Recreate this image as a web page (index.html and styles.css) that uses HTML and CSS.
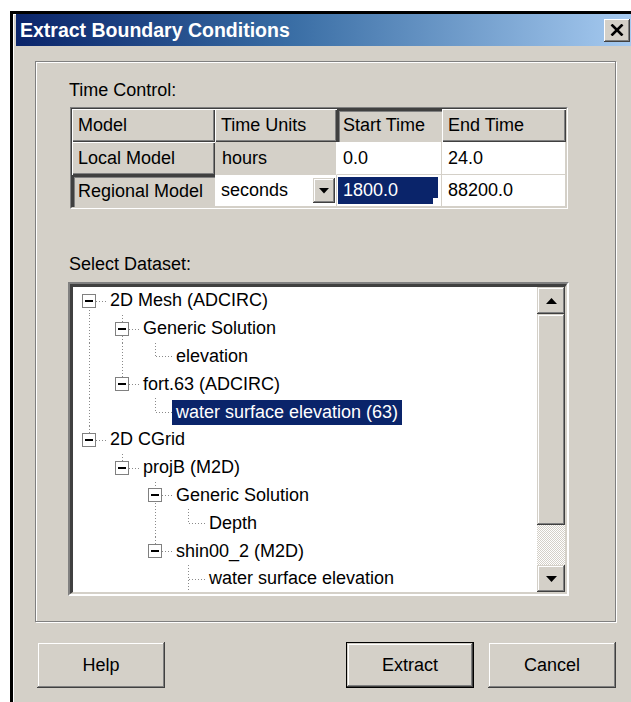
FILE: index.html
```html
<!DOCTYPE html>
<html lang="en">
<head>
<meta charset="utf-8">
<title>Extract Boundary Conditions</title>
<link rel="stylesheet" href="styles.css">
</head>
<body>
<div class="window">
  <div class="titlebar">
    <span class="title">Extract Boundary Conditions</span>
    <span class="close" title="Close">
      <svg width="14" height="12" viewBox="0 0 14 12"><path d="M1.5 0.5 L12.5 11.5 M12.5 0.5 L1.5 11.5" stroke="#000" stroke-width="2.6" fill="none"/></svg>
    </span>
  </div>

  <div class="groupbox">
    <div class="label">Time Control:</div>
    <div class="grid-outer">
      <div class="grid">
        <div class="cell hdr">Model</div>
        <div class="cell hdr">Time Units</div>
        <div class="cell hdr pressed">Start Time</div>
        <div class="cell hdr">End Time</div>

        <div class="cell hdr">Local Model</div>
        <div class="cell data grey">hours</div>
        <div class="cell data">0.0</div>
        <div class="cell data">24.0</div>

        <div class="cell hdr pressed">Regional Model</div>
        <div class="cell data combo">
          <span>seconds</span>
          <span class="dropbtn"><svg width="10" height="6" viewBox="0 0 10 6"><polygon points="0,0 10,0 5,5.5" fill="#000"/></svg></span>
        </div>
        <div class="cell data selcell"><span class="selfill">1800.0</span></div>
        <div class="cell data">88200.0</div>
      </div>
    </div>

    <div class="label dataset">Select Dataset:</div>
    <div class="treebox">
      <div class="treeinner">
        <div class="tree">
          <div class="row">
            <span class="g vb h"><i class="bx"></i></span>
            <span class="lbl">2D Mesh (ADCIRC)</span>
          </div>
          <div class="row">
            <span class="g vf"></span>
            <span class="g vf h"><i class="bx"></i></span>
            <span class="lbl">Generic Solution</span>
          </div>
          <div class="row">
            <span class="g vf"></span>
            <span class="g vf"></span>
            <span class="g vt h"></span>
            <span class="lbl">elevation</span>
          </div>
          <div class="row">
            <span class="g vf"></span>
            <span class="g vt h"><i class="bx"></i></span>
            <span class="lbl">fort.63 (ADCIRC)</span>
          </div>
          <div class="row">
            <span class="g vf"></span>
            <span class="g"></span>
            <span class="g vt h"></span>
            <span class="lbl sel">water surface elevation (63)</span>
          </div>
          <div class="row">
            <span class="g vt h"><i class="bx"></i></span>
            <span class="lbl">2D CGrid</span>
          </div>
          <div class="row">
            <span class="g"></span>
            <span class="g vt h"><i class="bx"></i></span>
            <span class="lbl">projB (M2D)</span>
          </div>
          <div class="row">
            <span class="g"></span>
            <span class="g"></span>
            <span class="g vf h"><i class="bx"></i></span>
            <span class="lbl">Generic Solution</span>
          </div>
          <div class="row">
            <span class="g"></span>
            <span class="g"></span>
            <span class="g vf"></span>
            <span class="g vt h"></span>
            <span class="lbl">Depth</span>
          </div>
          <div class="row">
            <span class="g"></span>
            <span class="g"></span>
            <span class="g vt h"><i class="bx"></i></span>
            <span class="lbl">shin00_2 (M2D)</span>
          </div>
          <div class="row">
            <span class="g"></span>
            <span class="g"></span>
            <span class="g"></span>
            <span class="g vf h"></span>
            <span class="lbl">water surface elevation</span>
          </div>
        </div>
        <div class="vscroll">
          <span class="sbtn"><svg width="11" height="6" viewBox="0 0 11 6"><polygon points="5.5,0 11,6 0,6" fill="#000"/></svg></span>
          <span class="thumb"></span>
          <span class="track"></span>
          <span class="sbtn"><svg width="11" height="6" viewBox="0 0 11 6"><polygon points="0,0 11,0 5.5,6" fill="#000"/></svg></span>
        </div>
      </div>
    </div>
  </div>

  <div class="buttons">
    <span class="btn">Help</span>
    <span class="spacer"></span>
    <span class="btn default">Extract</span>
    <span class="btn">Cancel</span>
  </div>
</div>
</body>
</html>
```

FILE: styles.css
```css
html, body {
  margin: 0;
  height: 100%;
  overflow: hidden;
  background: #fff;
}

body {
  font-family: "Liberation Sans", Arial, sans-serif;
  font-size: 18px;
  color: #000;
}

/* dialog frame */
.window {
  margin: 11px 0 0 10px;
  height: 691px;
  box-sizing: border-box;
  border-top: 3px solid #000;
  border-left: 3px solid #000;
  padding-left: 3px;
  background: #d4d0c8;
  box-shadow: inset 1px 1px #fff;
}

.titlebar {
  height: 32px;
  display: flex;
  align-items: center;
  padding-left: 4px;
  background: linear-gradient(to right, #0a246a 0%, #3a6ea5 45%, #a6caf0 100%);
}

.title {
  flex: 1;
  color: #fff;
  font-weight: bold;
  font-size: 19.5px;
  white-space: nowrap;
}

.close {
  width: 26px;
  height: 23px;
  margin-right: 1px;
  flex: none;
  display: flex;
  align-items: center;
  justify-content: center;
  background: #d4d0c8;
  box-shadow: inset -1px -1px #404040, inset 1px 1px #fff, inset -2px -2px #808080;
}

/* shared raised bevel */
.btn,
.sbtn,
.thumb,
.dropbtn {
  background: #d4d0c8;
  box-shadow: inset -1px -1px #404040, inset 1px 1px #d4d0c8, inset -2px -2px #808080, inset 2px 2px #fff;
}

/* group box */
.groupbox {
  margin: 15px 0 0 19px;
  width: 581px;
  height: 561px;
  box-sizing: border-box;
  border: 1px solid #808080;
  box-shadow: inset 1px 1px #fff, 1px 1px #fff;
  padding: 18px 0 0 33px;
}

.label {
  line-height: 21px;
  height: 21px;
  white-space: nowrap;
}

.label.dataset {
  margin-top: 45px;
}

/* time control grid */
.grid-outer {
  margin: 6px 0 0 1px;
  width: 498px;
  box-sizing: border-box;
  border: 1px solid;
  border-color: #808080 #fff #fff #808080;
}

.grid {
  display: grid;
  grid-template-columns: 143px 122px 105px 124px;
  grid-template-rows: 33px 33px 32px;
  border: 1px solid;
  border-color: #404040 #d4d0c8 #d4d0c8 #404040;
  background: #d4d0c8;
}

.cell {
  display: flex;
  align-items: center;
  padding-left: 6px;
  box-sizing: border-box;
  white-space: nowrap;
  overflow: hidden;
}

.hdr {
  background: #d4d0c8;
  box-shadow: inset 1px 1px #fff, inset -1px -1px #404040, inset -2px -2px #808080;
}

.hdr.pressed {
  box-shadow: inset 2px 2px #404040, inset 3px 3px #808080;
}

.data {
  background: #fff;
  border-right: 1px solid #d4d0c8;
  border-bottom: 1px solid #d4d0c8;
}

.data.grey {
  background: #d4d0c8;
  border-right-color: #fff;
  padding-left: 7px;
}

.combo {
  justify-content: space-between;
  padding-right: 1px;
}

.dropbtn {
  width: 22px;
  height: 25px;
  flex: none;
  display: flex;
  align-items: center;
  justify-content: center;
}

.selcell {
  padding: 2px 3px 2px 1px;
  align-items: stretch;
}

.selfill {
  flex: 1;
  position: relative;
  display: flex;
  align-items: center;
  padding-left: 5px;
  background: #0a246a;
  color: #fff;
}

/* fill handle notch at the corner of the active cell */
.selfill::after {
  content: "";
  position: absolute;
  right: 0;
  bottom: 0;
  width: 5px;
  height: 6px;
  background: #fff;
}

/* dataset tree */
.treebox {
  margin: 7px 0 0 -1px;
  width: 501px;
  height: 314px;
  box-sizing: border-box;
  border: 2px solid;
  border-color: #808080 #fff #fff #808080;
}

.treeinner {
  height: 100%;
  box-sizing: border-box;
  display: flex;
  border-style: solid;
  border-width: 3px 2px 2px 3px;
  border-color: #404040 #d4d0c8 #d4d0c8 #404040;
  background: #fff;
}

.tree {
  flex: 1;
  overflow: hidden;
}

.row {
  display: flex;
  align-items: center;
  height: 27.8px;
}

.g {
  position: relative;
  flex: none;
  width: 33px;
  height: 100%;
}

.g.vf::before,
.g.vt::before,
.g.vb::before {
  content: "";
  position: absolute;
  left: 16px;
  width: 1px;
  background: repeating-linear-gradient(to bottom, #8a8a8a 0 1px, transparent 1px 3px);
}

.g.vf::before { top: 0; bottom: 0; }
.g.vt::before { top: 0; height: 50%; }
.g.vb::before { top: 50%; bottom: 0; }

.g.h::after {
  content: "";
  position: absolute;
  left: 17px;
  right: 0;
  top: 50%;
  height: 1px;
  background: repeating-linear-gradient(to right, #8a8a8a 0 1px, transparent 1px 3px);
}

.bx {
  position: absolute;
  z-index: 1;
  left: 9px;
  top: 50%;
  margin-top: -7px;
  width: 14px;
  height: 14px;
  box-sizing: border-box;
  border: 1px solid #808080;
  background: #fff;
}

.bx::after {
  content: "";
  position: absolute;
  left: 2px;
  top: 5px;
  width: 8px;
  height: 2px;
  background: #000;
}

.lbl {
  padding: 0 4px;
  height: 25px;
  line-height: 25px;
  white-space: nowrap;
}

.lbl.sel {
  background: #0a246a;
  color: #fff;
}

/* vertical scroll bar */
.vscroll {
  width: 28px;
  flex: none;
  display: flex;
  flex-direction: column;
}

.sbtn {
  height: 27px;
  flex: none;
  display: flex;
  align-items: center;
  justify-content: center;
}

.thumb {
  height: 211px;
  flex: none;
}

.track {
  flex: 1;
  background: repeating-conic-gradient(#fff 0 25%, #d4d0c8 0 50%) 0 0 / 2px 2px;
}

/* dialog buttons */
.buttons {
  display: flex;
  gap: 14px;
  margin: 20px 0 0 21px;
  width: 579px;
}

.spacer {
  flex: 1;
}

.btn {
  width: 128px;
  height: 46px;
  flex: none;
  box-sizing: border-box;
  display: flex;
  align-items: center;
  justify-content: center;
}

.btn.default {
  border: 1px solid #000;
}
```
